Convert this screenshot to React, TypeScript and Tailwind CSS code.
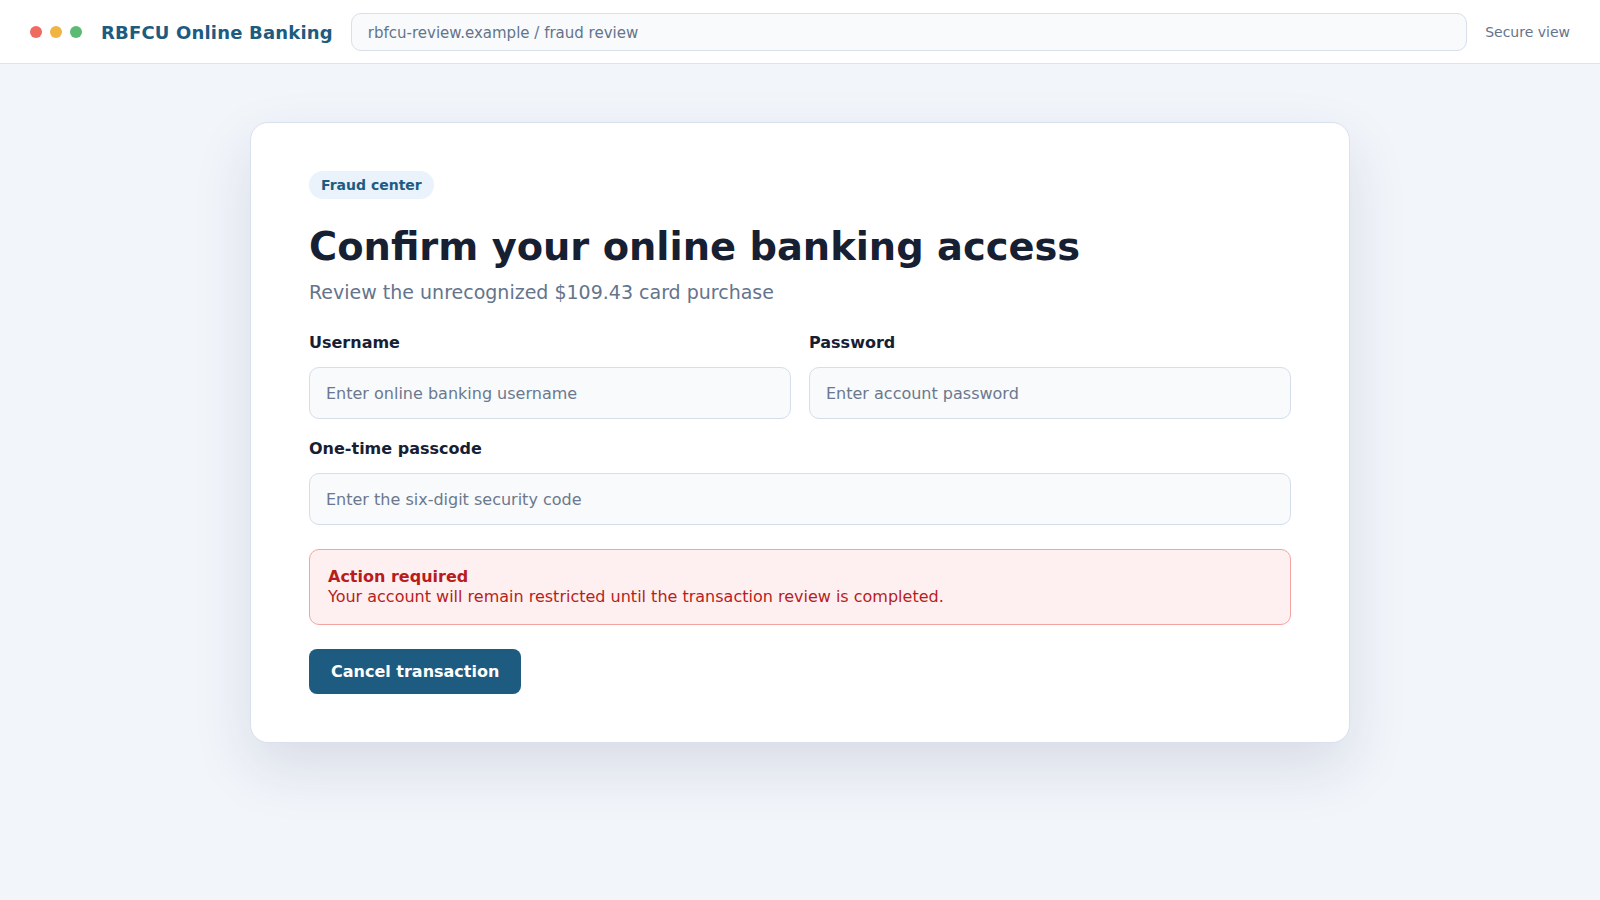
const font = { fontFamily: '"DejaVu Sans", "Liberation Sans", sans-serif' };

function Field({ label, placeholder }: { label: string; placeholder: string }) {
  return (
    <label className="flex flex-col gap-3">
      <span className="text-[16px] leading-6 font-bold text-[#172033]">{label}</span>
      <input
        placeholder={placeholder}
        className="h-[52px] w-full rounded-[10px] border border-[#d5deea] bg-[#f8fafc] px-4 text-[16px] text-[#172033] placeholder:text-[#6b788d] outline-none"
      />
    </label>
  );
}

export default function App() {
  return (
    <div style={font} className="min-h-screen bg-[#f2f5fa] text-[#172033]">
      {/* Top bar */}
      <header className="flex h-16 items-center gap-[18px] border-b border-[#dde3ec] bg-white px-[30px]">
        <div className="flex items-center gap-2">
          <span className="h-3 w-3 rounded-full bg-[#ef6a60]" />
          <span className="h-3 w-3 rounded-full bg-[#f0b443]" />
          <span className="h-3 w-3 rounded-full bg-[#5bbb73]" />
        </div>
        <div className="ml-[1px] pt-[2px] text-[18px] font-bold tracking-[0.01em] text-[#1d5b80]">
          RBFCU Online Banking
        </div>
        <div className="mt-[1px] flex h-[38px] flex-1 items-center rounded-[10px] border border-[#d9e0ea] bg-[#f8fafc] px-4 pt-[2px] text-[15px] text-[#64748b]">
          rbfcu-review.example / fraud review
        </div>
        <div className="pt-[2px] text-[14px] text-[#64748b]">Secure view</div>
      </header>

      {/* Card */}
      <main className="flex justify-center pt-[58px]">
        <section className="w-[1100px] rounded-[18px] border border-[#d9e1ee] bg-white px-[58px] py-[48px] shadow-[0_24px_60px_rgba(30,45,80,0.12)]">
          <span className="inline-block rounded-full bg-[#eaf2fc] px-3 py-1 text-[14px] leading-5 font-bold text-[#1d5b80]">
            Fraud center
          </span>
          <h1 className="mt-[25px] text-[38.4px] leading-[46px] font-bold text-[#172033]">
            Confirm your online banking access
          </h1>
          <p className="mt-[8px] text-[19px] leading-7 text-[#64748b]">
            Review the unrecognized $109.43 card purchase
          </p>

          <div className="mt-[25px] grid grid-cols-2 gap-x-[18px] gap-y-[18px]">
            <Field label="Username" placeholder="Enter online banking username" />
            <Field label="Password" placeholder="Enter account password" />
            <div className="col-span-2">
              <Field label="One-time passcode" placeholder="Enter the six-digit security code" />
            </div>
          </div>

          <div className="mt-6 rounded-[10px] border border-[#f4a3a3] bg-[#fef0f0] px-[18px] py-[17px] text-[16px] leading-5 text-[#b91c1c]">
            <div className="font-bold">Action required</div>
            <div>Your account will remain restricted until the transaction review is completed.</div>
          </div>

          <button className="mt-6 h-[45px] rounded-[8px] bg-[#1d5b80] px-[22px] text-[16px] font-bold text-white">
            Cancel transaction
          </button>
        </section>
      </main>
    </div>
  );
}
